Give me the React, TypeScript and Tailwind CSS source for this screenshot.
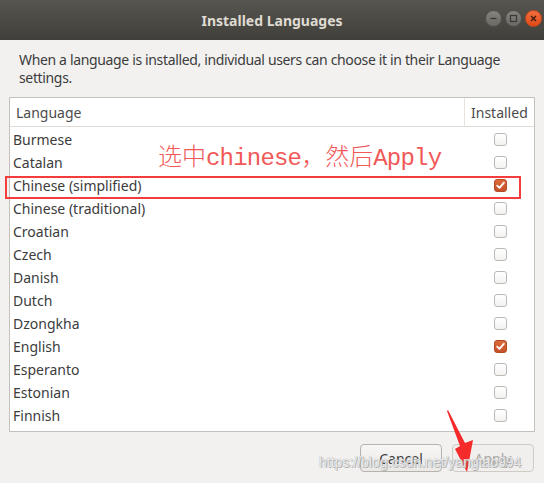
import React from "react";

const languages: { name: string; checked?: boolean }[] = [
  { name: "Burmese" },
  { name: "Catalan" },
  { name: "Chinese (simplified)", checked: true },
  { name: "Chinese (traditional)" },
  { name: "Croatian" },
  { name: "Czech" },
  { name: "Danish" },
  { name: "Dutch" },
  { name: "Dzongkha" },
  { name: "English", checked: true },
  { name: "Esperanto" },
  { name: "Estonian" },
  { name: "Finnish" },
];

function CheckBox({ checked }: { checked?: boolean }) {
  if (checked) {
    return (
      <div className="w-[13px] h-[13px] rounded-[3px] bg-gradient-to-b from-[#dd6a3a] to-[#c5512a] border border-[#b24a24] flex items-center justify-center">
        <svg width="9" height="9" viewBox="0 0 9 9">
          <path d="M1.2 4.6 L3.5 6.8 L7.8 1.8" stroke="white" strokeWidth="1.8" fill="none" strokeLinecap="round" strokeLinejoin="round" />
        </svg>
      </div>
    );
  }
  return <div className="w-[13px] h-[13px] rounded-[3px] bg-gradient-to-b from-white to-[#f3f2f1] border border-[#bcb9b4]" />;
}

function WindowButton({ kind }: { kind: "min" | "max" | "close" }) {
  const isClose = kind === "close";
  return (
    <div
      className={`w-[17px] h-[17px] rounded-full flex items-center justify-center border ${
        isClose
          ? "bg-gradient-to-b from-[#f26f3d] to-[#df4a16] border-[#c4461c]"
          : "bg-gradient-to-b from-[#85837e] to-[#6a6964] border-[#4f4e4a]"
      }`}
    >
      <svg width="9" height="9" viewBox="0 0 9 9">
        {kind === "min" && <path d="M1.5 4.5 H7.5" stroke="#3a3935" strokeWidth="1.3" />}
        {kind === "max" && <rect x="1.5" y="1.5" width="6" height="6" fill="none" stroke="#3a3935" strokeWidth="1.2" />}
        {kind === "close" && <path d="M2 2 L7 7 M7 2 L2 7" stroke="#3a1a0c" strokeWidth="1.3" />}
      </svg>
    </div>
  );
}

export default function App() {
  return (
    <div className="relative w-[544px] h-[483px] overflow-hidden bg-[#f2f1f0] flex flex-col font-['Noto_Sans',sans-serif] text-[#3c3c3c]">
      {/* Title bar */}
      <div className="relative h-[40px] shrink-0 bg-gradient-to-b from-[#57554f] to-[#403f3b] flex items-center justify-center">
        <span className="text-[14px] font-bold text-[#dfdbd2]">Installed Languages</span>
        <div className="absolute right-[2px] top-[10px] flex gap-[3px]">
          <WindowButton kind="min" />
          <WindowButton kind="max" />
          <WindowButton kind="close" />
        </div>
      </div>

      {/* Description */}
      <p className="pl-[19px] pr-[8px] pt-[11px] text-[14px] leading-[18px] tracking-[-0.35px]">
        When a language is installed, individual users can choose it in their Language settings.
      </p>

      {/* Table */}
      <div className="mx-[9px] mt-[10px] h-[335px] border border-[#c4c1bc] bg-white flex flex-col">
        <div className="h-[29px] flex border-b border-[#dedbd7] text-[14px]">
          <div className="flex-1 flex items-center pl-[6px] text-[#4b4b4b]">Language</div>
          <div className="w-[70px] flex items-center pl-[6px] border-l border-[#e6e3e0] text-[#4b4b4b]">Installed</div>
        </div>
        <div className="pt-[1px]">
          {languages.map((l) => (
            <div key={l.name} className="h-[23px] flex items-center text-[14px]">
              <div className="flex-1 pl-[3px]">{l.name}</div>
              <div className="w-[70px] flex justify-center pl-[2px]">
                <CheckBox checked={l.checked} />
              </div>
            </div>
          ))}
        </div>
      </div>

      {/* Buttons */}
      <div className="flex justify-end gap-[10px] pr-[10px] pt-[12px]">
        <button className="w-[82px] h-[28px] rounded-[4px] border border-[#b6b2ac] bg-gradient-to-b from-[#f7f6f5] to-[#ebe9e7] text-[14px] text-[#3c3c3c]">
          Cancel
        </button>
        <button className="w-[82px] h-[28px] rounded-[4px] border border-[#cfcbc6] bg-[#f0efee] text-[14px] text-[#a8a5a1]">
          Apply
        </button>
      </div>

      {/* Annotation overlays */}
      <div className="absolute left-[5px] top-[176px] w-[516px] h-[23px] border-2 border-[#f53c3c]" />
      <div className="absolute left-[158px] top-[140px] text-[24px] leading-[30px] text-[#f04848] font-['Liberation_Mono','Noto_Sans_CJK_SC',monospace] whitespace-nowrap opacity-90">
        <span className="font-['Noto_Sans_CJK_SC',sans-serif] font-light">选中</span>
        <span className="tracking-[-0.8px]">chinese</span>
        <span className="font-['Noto_Sans_CJK_SC',sans-serif] font-light">，然后</span>
        <span className="tracking-[-0.8px]">Apply</span>
      </div>
      <svg className="absolute left-0 top-0" width="544" height="483" viewBox="0 0 544 483">
        <polygon points="448,410 465,443 473,440 467,472 455,449 460,446 447,411" fill="#f52a2a" />
      </svg>
      <div className="absolute left-[319px] top-[452px] text-[14px] text-white/80 font-['Liberation_Sans',sans-serif] [text-shadow:0_0_1px_#8a8a8a,1px_1px_0_#b8b8b8] whitespace-nowrap">
        https://blog.csdn.net/yangtao994
      </div>
    </div>
  );
}
